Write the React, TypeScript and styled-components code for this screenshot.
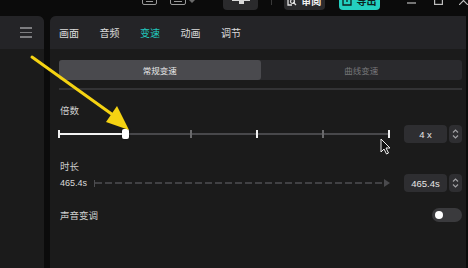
import styled, { createGlobalStyle } from "styled-components";

const Global = createGlobalStyle`
  html, body {
    margin: 0;
    padding: 0;
    background: #0b0b0b;
    overflow: hidden;
  }
  * { box-sizing: border-box; }
`;

const Window = styled.div`
  position: relative;
  width: 468px;
  height: 268px;
  display: flex;
  flex-direction: column;
  background: #0b0b0b;
  font-family: "Noto Sans CJK SC", "Noto Sans", sans-serif;
  overflow: hidden;
`;

const TitleBar = styled.div`
  height: 16px;
  flex: none;
  display: flex;
  align-items: flex-end;
  overflow: hidden;
`;

const TopIcon = styled.div<{ $left: number; $w: number }>`
  margin-left: ${(p) => p.$left}px;
  width: ${(p) => p.$w}px;
  height: 18px;
  margin-bottom: 11px;
  border: 1.5px solid #9a9a9a;
  border-radius: 2px;
  display: flex;
  align-items: flex-end;
  padding: 0 3px 2px;
  &::after {
    content: "";
    flex: 1;
    height: 1.5px;
    background: #9a9a9a;
  }
`;

const Caret = styled.div`
  margin-left: 3px;
  margin-bottom: 13px;
  width: 0;
  height: 0;
  border-left: 3px solid transparent;
  border-right: 3px solid transparent;
  border-top: 3px solid #6a6a6a;
`;

const Divider = styled.div`
  margin-left: 13px;
  width: 1px;
  height: 10px;
  margin-bottom: 11px;
  background: #3a3a3a;
`;

const TopButton = styled.div<{ $left: number; $w: number; $teal?: boolean }>`
  margin-left: ${(p) => p.$left}px;
  width: ${(p) => p.$w}px;
  height: 22px;
  margin-bottom: 6px;
  border-radius: 4px;
  background: ${(p) => (p.$teal ? "#24cfc0" : "#2a2a2c")};
  color: ${(p) => (p.$teal ? "#0d1f1d" : "#f0f0f0")};
  display: flex;
  align-items: flex-end;
  justify-content: center;
  gap: 4px;
  font-size: 10px;
  line-height: 12px;
  font-weight: 700;
  padding-bottom: 3px;
  svg { flex: none; margin-bottom: 1px; }
`;

const WinCtl = styled.div<{ $left: number }>`
  margin-left: ${(p) => p.$left}px;
  margin-bottom: 11px;
  display: flex;
  align-items: flex-end;
`;

const Main = styled.div`
  flex: 1;
  display: flex;
  gap: 6px;
  min-height: 0;
`;

const LeftPanel = styled.div`
  width: 44px;
  flex: none;
  display: flex;
  flex-direction: column;
  background: #1b1b1b;
  border-top-right-radius: 6px;
  overflow: hidden;
`;

const PanelHead = styled.div`
  height: 33px;
  flex: none;
  background: #242427;
  display: flex;
  align-items: center;
`;

const LeftHead = styled(PanelHead)`
  justify-content: flex-end;
  padding-right: 12px;
`;

const Hamburger = styled.div`
  width: 12px;
  display: flex;
  flex-direction: column;
  gap: 3px;
  span {
    height: 1.5px;
    background: #7d7d80;
  }
`;

const RightPanel = styled.div`
  flex: 1;
  margin-right: 2px;
  display: flex;
  flex-direction: column;
  background: #1b1b1b;
  border-top-left-radius: 6px;
  overflow: hidden;
`;

const Tabs = styled(PanelHead)`
  padding-left: 9px;
  gap: 20.5px;
`;

const Tab = styled.div<{ $active?: boolean }>`
  font-size: 10px;
  line-height: 12px;
  color: ${(p) => (p.$active ? "#22c7bd" : "#dcdcdc")};
`;

const Body = styled.div`
  padding: 11px 4px 0 9px;
  display: flex;
  flex-direction: column;
`;

const Segment = styled.div`
  height: 20px;
  display: grid;
  grid-template-columns: 1fr 1fr;
  background: #2a2a2d;
  border-radius: 3px;
`;

const SegItem = styled.div<{ $active?: boolean }>`
  display: flex;
  align-items: center;
  justify-content: center;
  font-size: 8.5px;
  border-radius: 3px;
  background: ${(p) => (p.$active ? "#4a4a4e" : "transparent")};
  color: ${(p) => (p.$active ? "#e8e8e8" : "#77777a")};
`;

const Rule = styled.div`
  margin-top: 8px;
  height: 2px;
  background: #333335;
`;

const Label = styled.div<{ $top: number }>`
  margin-top: ${(p) => p.$top}px;
  font-size: 9.5px;
  line-height: 12px;
  color: #cfcfcf;
  padding-left: 1px;
`;

const Row = styled.div<{ $top: number }>`
  margin-top: ${(p) => p.$top}px;
  height: 18px;
  display: flex;
  align-items: center;
`;

const Track = styled.div`
  position: relative;
  flex: 1;
  height: 2px;
  background: #48484b;
  margin-right: 15px;
`;

const Fill = styled.div`
  position: absolute;
  left: 0;
  top: 0;
  height: 2px;
  background: #f2f2f2;
`;

const Tick = styled.div<{ $light?: boolean }>`
  position: absolute;
  top: -3px;
  width: 1.5px;
  height: 8px;
  margin-left: -0.75px;
  background: ${(p) => (p.$light ? "#f0f0f0" : "#6a6a6c")};
`;

const Handle = styled.div`
  position: absolute;
  top: -4px;
  width: 7px;
  height: 10px;
  margin-left: -3.5px;
  background: #ffffff;
  border-radius: 2px;
  box-shadow: 0 0 2px rgba(0, 0, 0, 0.6);
`;

const NumBox = styled.div`
  width: 43px;
  height: 18px;
  flex: none;
  background: #2e2e31;
  border-radius: 4px;
  display: flex;
  align-items: center;
  justify-content: center;
  font-family: "Liberation Sans", "Noto Sans", sans-serif;
  font-size: 9.5px;
  color: #e6e6e6;
`;

const Stepper = styled.div`
  width: 13px;
  height: 18px;
  flex: none;
  margin-left: 2px;
  background: #2e2e31;
  border-radius: 4px;
  display: flex;
  align-items: center;
  justify-content: center;
`;

const Value = styled.div`
  width: 27px;
  flex: none;
  font-family: "Liberation Sans", "Noto Sans", sans-serif;
  font-size: 9px;
  color: #dadada;
  padding-left: 1px;
`;

const DashLine = styled.div`
  flex: 1;
  display: flex;
  align-items: center;
  margin: 0 14px 0 8px;
`;

const DashStart = styled.div`
  width: 1px;
  height: 7px;
  background: #4d4d50;
`;

const Dashes = styled.div`
  flex: 1;
  height: 2px;
  background: repeating-linear-gradient(
    to right,
    #414144 0 7px,
    transparent 7px 10px
  );
`;

const DashEnd = styled.div`
  width: 0;
  height: 0;
  border-top: 4px solid transparent;
  border-bottom: 4px solid transparent;
  border-left: 6px solid #4a4a4d;
`;

const ToggleRow = styled.div<{ $top: number }>`
  margin-top: ${(p) => p.$top}px;
  display: flex;
  align-items: center;
  justify-content: space-between;
`;

const Toggle = styled.div`
  width: 30px;
  height: 14px;
  border-radius: 7px;
  background: #3a3a3d;
  display: flex;
  align-items: center;
  padding-left: 3px;
  &::before {
    content: "";
    width: 8px;
    height: 8px;
    border-radius: 50%;
    background: #ffffff;
  }
`;

const Overlay = styled.svg`
  position: absolute;
  left: 0;
  top: 0;
  pointer-events: none;
`;

const StepIcon = () => (
  <svg width="7" height="12" viewBox="0 0 7 12">
    <path d="M1 4.5 L3.5 2 L6 4.5 M1 7.5 L3.5 10 L6 7.5" fill="none" stroke="#a0a0a3" strokeWidth="1.2" />
  </svg>
);

export default function App() {
  return (
    <>
      <Global />
      <Window>
        <TitleBar>
          <TopIcon $left={142} $w={15} />
          <TopIcon $left={13} $w={17} />
          <Caret />
          <TopButton $left={28} $w={36}>
            <svg width="20" height="12" viewBox="0 0 20 12">
              <path d="M1 2 H19 V7 H13 V10 H8 V7 H1 Z" fill="#d8d8d8" />
              <path d="M6 2 V5 M12 2 V5" stroke="#2a2a2c" strokeWidth="1.5" />
            </svg>
          </TopButton>
          <Divider />
          <TopButton $left={12} $w={43}>
            <svg width="10" height="10" viewBox="0 0 10 10">
              <path d="M8 2 V1 H1 V9 H5 M6 6 L9 9" fill="none" stroke="#e0e0e0" strokeWidth="1.3" />
              <circle cx="5.5" cy="5.5" r="2" fill="none" stroke="#e0e0e0" strokeWidth="1.2" />
            </svg>
            <span>审阅</span>
          </TopButton>
          <TopButton $left={14} $w={43} $teal>
            <svg width="10" height="10" viewBox="0 0 10 10">
              <path d="M3 1 H1 V9 H9 V1 H7 M5 1 V6" fill="none" stroke="#0d1f1d" strokeWidth="1.3" />
            </svg>
            <span>导出</span>
          </TopButton>
          <WinCtl $left={27}>
            <svg width="9" height="4" viewBox="0 0 9 4">
              <path d="M0 2 H9" stroke="#bdbdbd" strokeWidth="1.2" />
            </svg>
          </WinCtl>
          <WinCtl $left={18}>
            <svg width="9" height="9" viewBox="0 0 9 9">
              <rect x="0.6" y="0.6" width="7.8" height="7.8" fill="none" stroke="#bdbdbd" strokeWidth="1.2" />
            </svg>
          </WinCtl>
          <WinCtl $left={16}>
            <svg width="9" height="9" viewBox="0 0 9 9">
              <path d="M0 0 L9 9 M9 0 L0 9" stroke="#bdbdbd" strokeWidth="1.2" />
            </svg>
          </WinCtl>
        </TitleBar>
        <Main>
          <LeftPanel>
            <LeftHead>
              <Hamburger>
                <span />
                <span />
                <span />
              </Hamburger>
            </LeftHead>
          </LeftPanel>
          <RightPanel>
            <Tabs>
              <Tab>画面</Tab>
              <Tab>音频</Tab>
              <Tab $active>变速</Tab>
              <Tab>动画</Tab>
              <Tab>调节</Tab>
            </Tabs>
            <Body>
              <Segment>
                <SegItem $active>常规变速</SegItem>
                <SegItem>曲线变速</SegItem>
              </Segment>
              <Rule />
              <Label $top={14}>倍数</Label>
              <Row $top={9}>
                <Track>
                  <Fill style={{ width: "20%" }} />
                  <Tick $light style={{ left: "0%" }} />
                  <Tick style={{ left: "40%" }} />
                  <Tick $light style={{ left: "60%" }} />
                  <Tick style={{ left: "80%" }} />
                  <Tick $light style={{ left: "100%" }} />
                  <Handle style={{ left: "20%" }} />
                </Track>
                <NumBox>4 x</NumBox>
                <Stepper>
                  <StepIcon />
                </Stepper>
              </Row>
              <Label $top={17}>时长</Label>
              <Row $top={2}>
                <Value>465.4s</Value>
                <DashLine>
                  <DashStart />
                  <Dashes />
                  <DashEnd />
                </DashLine>
                <NumBox>465.4s</NumBox>
                <Stepper>
                  <StepIcon />
                </Stepper>
              </Row>
              <ToggleRow $top={16}>
                <Label $top={0}>声音变调</Label>
                <Toggle />
              </ToggleRow>
            </Body>
          </RightPanel>
        </Main>
        <Overlay width="468" height="268" viewBox="0 0 468 268">
          <line x1="32" y1="57" x2="113" y2="115" stroke="#f5d312" strokeWidth="3" strokeLinecap="round" />
          <polygon points="129,130 106,122 117,106" fill="#f5d312" />
          <path
            d="M381 139 L381 152 L384 149 L386.5 154 L388.5 153 L386 148 L390 148 Z"
            fill="#111"
            stroke="#f2f2f2"
            strokeWidth="1"
            strokeLinejoin="round"
          />
        </Overlay>
      </Window>
    </>
  );
}
